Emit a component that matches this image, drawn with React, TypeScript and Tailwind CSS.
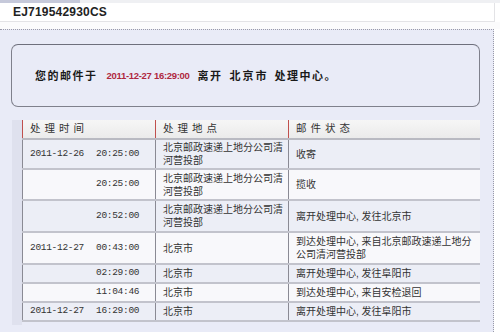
const CJK = "font-['Liberation_Sans','Noto_Sans_CJK_SC',sans-serif]";
const MONO = "font-['Liberation_Mono','Noto_Sans_CJK_SC',monospace]";

type Row = {
  date?: string;
  time: string;
  place: string[];
  status: string[];
  height: string;
  bg: string;
};

const ROWS: Row[] = [
  { date: "2011-12-26", time: "20:25:00", place: ["北京邮政速递上地分公司清", "河营投部"], status: ["收寄"], height: "h-[30px]", bg: "bg-[#eceef6]" },
  { time: "20:25:00", place: ["北京邮政速递上地分公司清", "河营投部"], status: ["揽收"], height: "h-[31px]", bg: "bg-[#f8f8fb]" },
  { time: "20:52:00", place: ["北京邮政速递上地分公司清", "河营投部"], status: ["离开处理中心, 发往北京市"], height: "h-[32px]", bg: "bg-[#eceef6]" },
  { date: "2011-12-27", time: "00:43:00", place: ["北京市"], status: ["到达处理中心, 来自北京邮政速递上地分", "公司清河营投部"], height: "h-[32px]", bg: "bg-[#f8f8fb]" },
  { time: "02:29:00", place: ["北京市"], status: ["离开处理中心, 发往阜阳市"], height: "h-[19px]", bg: "bg-[#eceef6]" },
  { time: "11:04:46", place: ["北京市"], status: ["到达处理中心, 来自安检退回"], height: "h-[19px]", bg: "bg-[#f8f8fb]" },
  { date: "2011-12-27", time: "16:29:00", place: ["北京市"], status: ["离开处理中心, 发往阜阳市"], height: "h-[19px]", bg: "bg-[#eceef6]" },
];

const TrackRow = ({ row }: { row: Row }) => (
  <div className={`grid grid-cols-[133px_133px_192px] border-b-2 border-[#c2c3cc] ${row.height} ${row.bg}`}>
    <div className={`flex items-center border-l border-[#8a8a94] pl-[7px] text-[9.5px] tracking-[-0.3px] text-[#333] ${MONO}`}>
      <span className="w-[66px]">{row.date ?? ""}</span>
      <span>{row.time}</span>
    </div>
    <div className="flex flex-col justify-center border-l border-[#8a8a94] pl-[7px] text-[10px] leading-[13px] text-[#333]">
      {row.place.map((line) => (
        <span key={line} className="whitespace-nowrap">{line}</span>
      ))}
    </div>
    <div className="flex flex-col justify-center border-l border-[#8a8a94] pl-[7px] text-[10px] leading-[13px] text-[#333]">
      {row.status.map((line) => (
        <span key={line} className="whitespace-nowrap">{line}</span>
      ))}
    </div>
  </div>
);

export default function App() {
  return (
    <div className={`w-[500px] h-[332px] overflow-hidden bg-white ${CJK}`}>
      <div className="flex h-[3px]">
        <div className="w-[80px] bg-[#c6c9da]" />
        <div className="flex-1 bg-[#eff0f3]" />
      </div>
      <div className="flex h-[19px] w-[495px] items-center border-r border-b border-[#e3e3e6] bg-white pl-[13px] text-[12px] font-bold tracking-[0.2px] text-[#222]">
        EJ719542930CS
      </div>
      <div className="h-[7px] bg-[#fbfbfc]" />

      <div className="h-[303px] w-[494px] border-t border-r border-dotted border-[#9a9aa8] bg-[#e9ebf7] pt-[14px]">
        <div className="ml-[11px] flex h-[63px] w-[469px] items-center rounded-[7px] border border-[#7f808c] border-t-[#6e6f7c] pl-[23px] pt-[2px] text-[11px] font-bold text-[#1a1a1a]">
          <span className="tracking-[1.5px]">您的邮件于</span>
          <span className="ml-[9px] text-[9.5px] tracking-[-0.3px] text-[#b0283f]">2011-12-27 16:29:00</span>
          <span className="ml-[8px] tracking-[1.5px]">离开</span>
          <span className="ml-[7px] tracking-[2px]">北京市</span>
          <span className="ml-[6px] tracking-[1.5px]">处理中心。</span>
        </div>

        <div className="mt-[13px] ml-[12px] flex">
          <div className="w-[10px] h-[205px] bg-[#dfe1ee]" />
          <div className="w-[458px]">
            <div className="grid h-[20px] grid-cols-[133px_133px_192px] border-b-2 border-[#b9bac2] bg-gradient-to-b from-[#f6f6f6] to-[#ebebeb] text-[10.5px] text-[#333]">
              <div className="flex items-center border-l border-[#c0504d] pl-[7px] tracking-[4px]">处理时间</div>
              <div className="flex items-center border-l border-[#c0504d] pl-[7px] tracking-[4px]">处理地点</div>
              <div className="flex items-center border-l border-[#c0504d] pl-[7px] tracking-[4px]">邮件状态</div>
            </div>
            {ROWS.map((row, i) => (
              <TrackRow key={i} row={row} />
            ))}
          </div>
        </div>
      </div>
    </div>
  );
}
